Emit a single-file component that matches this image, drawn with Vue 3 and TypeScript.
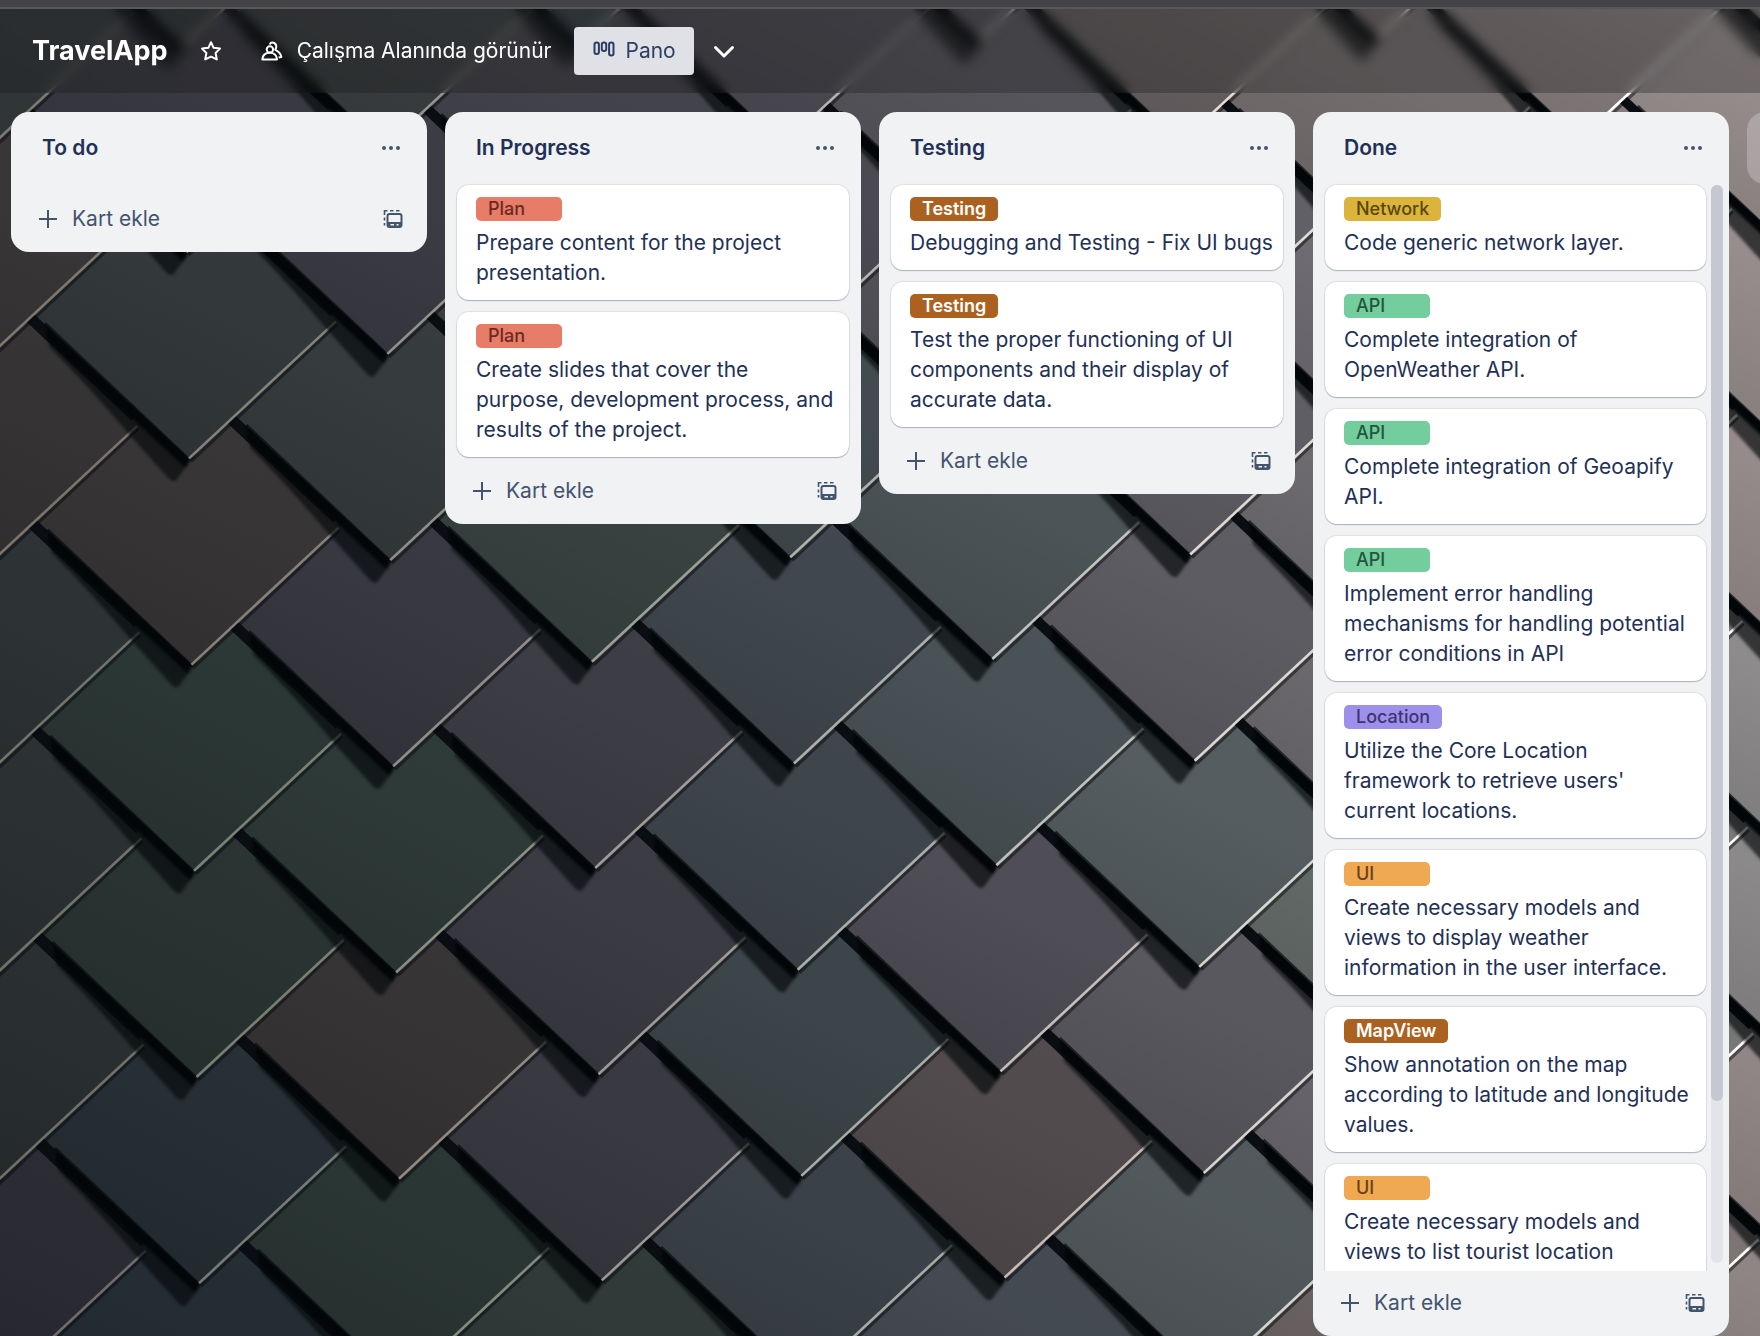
<script setup lang="ts">
type Tint = 'green' | 'teal' | 'blue' | 'purple' | 'brown' | 'grey'

interface Card {
  label: string
  tone: string
  text: string
}

interface List {
  title: string
  cards: Card[]
  scrolls?: boolean
}

interface Tile {
  id: string
  x: number
  y: number
  fill: string
  edge: string
}

const lists: List[] = [
  { title: 'To do', cards: [] },
  {
    title: 'In Progress',
    cards: [
      { label: 'Plan', tone: 'red', text: 'Prepare content for the project presentation.' },
      {
        label: 'Plan',
        tone: 'red',
        text: 'Create slides that cover the purpose, development process, and results of the project.',
      },
    ],
  },
  {
    title: 'Testing',
    cards: [
      { label: 'Testing', tone: 'rust', text: 'Debugging and Testing - Fix UI bugs' },
      {
        label: 'Testing',
        tone: 'rust',
        text: 'Test the proper functioning of UI components and their display of accurate data.',
      },
    ],
  },
  {
    title: 'Done',
    scrolls: true,
    cards: [
      { label: 'Network', tone: 'yellow', text: 'Code generic network layer.' },
      { label: 'API', tone: 'green', text: 'Complete integration of OpenWeather API.' },
      { label: 'API', tone: 'green', text: 'Complete integration of Geoapify API.' },
      {
        label: 'API',
        tone: 'green',
        text: 'Implement error handling mechanisms for handling potential error conditions in API',
      },
      {
        label: 'Location',
        tone: 'violet',
        text: "Utilize the Core Location framework to retrieve users' current locations.",
      },
      {
        label: 'UI',
        tone: 'orange',
        text: 'Create necessary models and views to display weather information in the user interface.',
      },
      {
        label: 'MapView',
        tone: 'rust',
        text: 'Show annotation on the map according to latitude and longitude values.',
      },
      {
        label: 'UI',
        tone: 'orange',
        text: 'Create necessary models and views to list tourist location',
      },
    ],
  },
]

// Wallpaper: overlapping slate shingles. Each tile hangs from its bottom tip,
// and rows are painted from the bottom up so that upper ones overlap.
const tintShift: Record<Tint, [number, number, number]> = {
  green: [-8, 4, 1],
  teal: [-8, 3, 6],
  blue: [-8, 1, 7],
  purple: [-1, 0, 7],
  brown: [3, 0, 1],
  grey: [-4, 1, 3],
}

const tints: Record<number, Tint[]> = {
  0: ['grey', 'brown', 'brown', 'grey', 'grey', 'grey', 'purple', 'blue', 'blue'],
  1: ['grey', 'purple', 'grey', 'brown', 'green', 'green', 'blue', 'blue', 'blue'],
  2: ['grey', 'purple', 'grey', 'purple', 'green', 'brown', 'green', 'blue', 'blue'],
  3: ['blue', 'purple', 'grey', 'green', 'purple', 'purple', 'purple', 'green', 'blue'],
  4: ['purple', 'purple', 'teal', 'blue', 'blue', 'teal', 'blue', 'blue', 'blue'],
  5: ['purple', 'purple', 'purple', 'teal', 'teal', 'purple', 'brown', 'blue', 'blue'],
  6: ['brown', 'purple', 'purple', 'purple', 'teal', 'purple', 'teal', 'grey', 'grey'],
  7: ['brown', 'brown', 'purple', 'purple', 'purple', 'green', 'purple', 'brown', 'grey'],
  8: ['brown', 'brown', 'brown', 'brown', 'grey', 'grey', 'brown', 'brown', 'grey'],
  9: ['brown', 'brown', 'brown', 'brown', 'grey', 'grey', 'brown', 'brown', 'grey'],
}

function rgb(values: number[]): string {
  return `rgb(${values.map((v) => Math.round(v)).join(',')})`
}

function buildTiles(): Tile[] {
  const result: Tile[] = []
  for (let half = 16; half >= -1; half--) {
    for (let col = 0; col <= 9; col++) {
      if ((half + col) % 2 === 0) continue
      const row = half / 2
      const x = 184 + 2.5 * row + (199 + 0.4 * row) * (col - 1)
      const y = 46 + 206.2 * row - (col - 1) * 1.4
      const cx = Math.max(0, x) / 1760
      const cy = (y - 120) / 1336
      const level = 56 + 14 * cx + 72 * cx * cx - cy * 14
      const shift = tintShift[tints[col][Math.max(0, Math.floor(row))]]
      const warm = cx * cx * 7
      const fill = [level + shift[0] + warm, level + shift[1], level + shift[2] + 1 - warm * 0.3]
      const lift = 66 + cx * 84
      const edge = [fill[0] + lift + 4, fill[1] + lift, fill[2] + lift - 12]
      result.push({ id: `${col}-${half}`, x, y, fill: rgb(fill), edge: rgb(edge) })
    }
  }
  return result
}

const tiles = buildTiles()
</script>

<template>
  <div class="app">
    <svg class="wallpaper" viewBox="0 0 1760 1336" preserveAspectRatio="xMidYMid slice" aria-hidden="true">
      <defs>
        <linearGradient id="sheen" x1="0.2" y1="1" x2="0.7" y2="0">
          <stop offset="0" stop-color="#000" stop-opacity="0.14" />
          <stop offset="0.6" stop-color="#000" stop-opacity="0" />
          <stop offset="1" stop-color="#fff" stop-opacity="0.03" />
        </linearGradient>
        <filter id="soft" x="-10%" y="-10%" width="120%" height="120%" color-interpolation-filters="sRGB">
          <feGaussianBlur stdDeviation="1.4" />
        </filter>
      </defs>
      <rect width="1760" height="1336" fill="#0a0e12" />
      <g v-for="tile in tiles" :key="tile.id" :transform="`translate(${tile.x} ${tile.y})`">
        <path d="M6 -4 L-13 22 Q-17 24 -22 18 L-58 -22 Q-98 -70 -140 -112 L-140 -131 Z" fill="#04090b" fill-opacity="0.66" filter="url(#soft)" />
        <path d="M2 -2 L-4 9 L-143 -121 L-142 -135 Z" fill="#020608" filter="url(#soft)" />
        <path d="M0 0 L147 -137 L12 -264 L0 -300 L-161 -150 Z" :fill="tile.fill" />
        <path d="M0 0 L147 -137 L12 -264 L0 -300 L-161 -150 Z" fill="url(#sheen)" />
        <path d="M-1 0 L-144 -135" stroke="#05090c" stroke-width="3" stroke-opacity="0.7" />
        <path d="M2 3 L148 -134" stroke="#05080b" stroke-width="3" stroke-opacity="0.5" />
        <path d="M0 0 L147 -137" :stroke="tile.edge" stroke-width="2.6" />
      </g>
    </svg>

    <div class="strip"></div>
    <header class="bar">
      <h1>TravelApp</h1>
      <button class="plain star" type="button" aria-label="Yıldız">
        <svg width="24" height="24" viewBox="0 0 24 24" fill="none" stroke="currentColor" stroke-width="2" stroke-linejoin="round">
          <path d="M12 3.2 L14.6 8.8 L21 9.6 L16.6 14 L17.8 20.4 L12 17.6 L6.2 20.4 L7.4 14 L3 9.6 L9.4 8.8 Z" />
        </svg>
      </button>
      <button class="plain visibility" type="button">
        <svg width="24" height="24" viewBox="0 0 24 24" fill="none" stroke="currentColor" stroke-width="2" stroke-linejoin="round">
          <path d="M2.4 20.4 C2.6 16.4 5.4 13.8 9.8 13.8 C14 13.8 16.8 16.4 17 20.4 Z" />
          <circle cx="9.9" cy="10.4" r="3.2" />
          <path d="M9.6 5.4 C10.6 3.6 12.6 3.2 14.2 4 C16.6 5.2 17 8.4 15.2 10.8 C18.8 12.4 20.8 14.6 21.4 18 L18.6 18.4" />
        </svg>
        <span>Çalışma Alanında görünür</span>
      </button>
      <button class="view" type="button">
        <svg width="24" height="24" viewBox="0 0 24 24" fill="none" stroke="currentColor" stroke-width="2">
          <rect x="2.5" y="3.5" width="4.4" height="11.5" rx="2" />
          <rect x="9.8" y="3.5" width="4.4" height="8.5" rx="2" />
          <rect x="17.1" y="3.5" width="4.4" height="13" rx="2" />
        </svg>
        <span>Pano</span>
      </button>
      <button class="plain more" type="button" aria-label="Görünümler">
        <svg width="24" height="24" viewBox="0 0 24 24" fill="none" stroke="currentColor" stroke-width="3" stroke-linecap="round" stroke-linejoin="round">
          <path d="M3.5 8.5 L12 17 L20.5 8.5" />
        </svg>
      </button>
    </header>

    <main class="board">
      <section v-for="list in lists" :key="list.title" class="list">
        <div class="list-head">
          <h2>{{ list.title }}</h2>
          <button class="plain" type="button" aria-label="Liste işlemleri">
            <svg width="20" height="20" viewBox="0 0 20 20" fill="currentColor">
              <circle cx="3" cy="10" r="2" />
              <circle cx="10" cy="10" r="2" />
              <circle cx="17" cy="10" r="2" />
            </svg>
          </button>
        </div>
        <div class="list-body" :class="{ scrolls: list.scrolls }">
          <div class="cards">
            <article v-for="(card, i) in list.cards" :key="i" class="card">
              <span class="label" :class="card.tone">{{ card.label }}</span>
              <p>{{ card.text }}</p>
            </article>
          </div>
          <div v-if="list.scrolls" class="track"><div class="thumb"></div></div>
        </div>
        <div class="list-foot">
          <button class="plain add" type="button">
            <svg width="24" height="24" viewBox="0 0 24 24" fill="none" stroke="currentColor" stroke-width="2">
              <path d="M12 3 V21 M3 12 H21" />
            </svg>
            <span>Kart ekle</span>
          </button>
          <button class="plain" type="button" aria-label="Şablondan oluştur">
            <svg width="20" height="20" viewBox="0 0 20 20" fill="none" stroke="currentColor" stroke-width="2">
              <path d="M1.5 16.5 V14 M1.5 11.5 V8.5 M1.5 6 V1.8 H4.5 M7 1.8 H10.5 M13 1.8 H16.5" stroke-width="1.6" />
              <rect x="4.5" y="5" width="14" height="13" rx="2" />
              <path d="M4.5 13 H18.5 V18 H4.5 Z" fill="currentColor" stroke="none" />
              <path d="M7.5 15.8 H11 M13.5 15.8 H15.5" stroke="#f1f2f4" stroke-width="1.4" />
            </svg>
          </button>
        </div>
      </section>
      <button class="new-list" type="button" aria-label="Başka liste ekle"></button>
    </main>
  </div>
</template>

<style>
html,
body {
  margin: 0;
  overflow: hidden;
}
</style>

<style scoped>
.app {
  position: relative;
  display: flex;
  flex-direction: column;
  height: 100vh;
  overflow: hidden;
  color: #1f3156;
  font-family: Inter, Roboto, 'Liberation Sans', sans-serif;
  font-size: 21px;
  line-height: 30px;
}

.wallpaper {
  position: absolute;
  inset: 0;
  width: 100%;
  height: 100%;
}

h1,
h2,
p {
  margin: 0;
}

button {
  border: 0;
  padding: 0;
  font: inherit;
  color: inherit;
}

svg {
  display: block;
  flex: none;
}

.plain {
  display: flex;
  align-items: center;
  background: none;
}

.strip {
  position: relative;
  flex: none;
  height: 7px;
  background: #434246;
  border-bottom: 2px solid #58575a;
}

.bar {
  position: relative;
  display: flex;
  flex: none;
  align-items: center;
  height: 84px;
  padding-left: 32px;
  color: #fff;
  background: rgba(24, 22, 22, 0.3);
  backdrop-filter: blur(6px);
}

h1 {
  font-size: 27px;
  font-weight: 700;
}

.star {
  margin-left: 31px;
}

.visibility {
  gap: 13px;
  margin-left: 37px;
}

.view {
  display: flex;
  align-items: center;
  gap: 9px;
  height: 48px;
  margin-left: 23px;
  padding: 0 18px;
  border-radius: 4px;
  color: #2c3e63;
  background: #dfe1e6;
}

.more {
  margin-left: 18px;
}

.board {
  position: relative;
  display: flex;
  flex: 1;
  align-items: flex-start;
  gap: 18px;
  min-height: 0;
  padding: 19px 0 0 11px;
}

.list {
  display: flex;
  flex: none;
  flex-direction: column;
  box-sizing: border-box;
  width: 416px;
  max-height: 100%;
  border-radius: 18px;
  background: #f1f2f4;
}

.list-head {
  display: flex;
  flex: none;
  align-items: center;
  justify-content: space-between;
  box-sizing: border-box;
  height: 73px;
  padding: 0 26px 2px 31px;
}

h2 {
  font-size: 21px;
  font-weight: 600;
}

.list-head button {
  color: #44546f;
}

.list-body {
  display: flex;
  flex: 0 1 auto;
  gap: 5px;
  min-height: 0;
  padding: 0 12px;
}

.list-body.scrolls {
  padding-right: 6px;
}

.cards {
  display: flex;
  flex: 1;
  flex-direction: column;
  gap: 12px;
  overflow: hidden;
  margin: -2px;
  padding: 2px;
}

.card {
  flex: none;
  padding: 12px 9px 12px 19px;
  border-radius: 12px;
  background: #fff;
  box-shadow: 0 1px 1px rgba(9, 30, 66, 0.25), 0 0 1px 1px rgba(9, 30, 66, 0.08);
}

.scrolls .card:last-child {
  min-height: 121px;
}

.label {
  display: block;
  box-sizing: border-box;
  width: fit-content;
  min-width: 86px;
  height: 24px;
  margin-bottom: 7px;
  padding: 0 12px;
  border-radius: 5px;
  font-size: 18px;
  font-weight: 500;
  line-height: 24px;
}

.red {
  color: #6b2a20;
  background: #e77c69;
}

.rust {
  color: #fff;
  font-weight: 600;
  background: #ab6221;
}

.yellow {
  color: #5a4610;
  background: #dbb43b;
}

.green {
  color: #25543f;
  background: #74cd9d;
}

.violet {
  color: #3d3470;
  background: #9d90ea;
}

.orange {
  color: #6b4216;
  background: #efa953;
}

.track {
  flex: none;
  width: 12px;
  margin-bottom: 6px;
  border-radius: 6px;
  background: #e3e4e9;
}

.thumb {
  height: 85%;
  border-radius: 6px;
  background: #c5c8d1;
}

.list-foot {
  display: flex;
  flex: none;
  align-items: center;
  justify-content: space-between;
  height: 67px;
  padding: 0 24px 0 25px;
  color: #44546f;
}

.add {
  gap: 12px;
}

.new-list {
  flex: none;
  width: 416px;
  height: 72px;
  border-radius: 18px;
  background: rgba(255, 255, 255, 0.24);
}
</style>
